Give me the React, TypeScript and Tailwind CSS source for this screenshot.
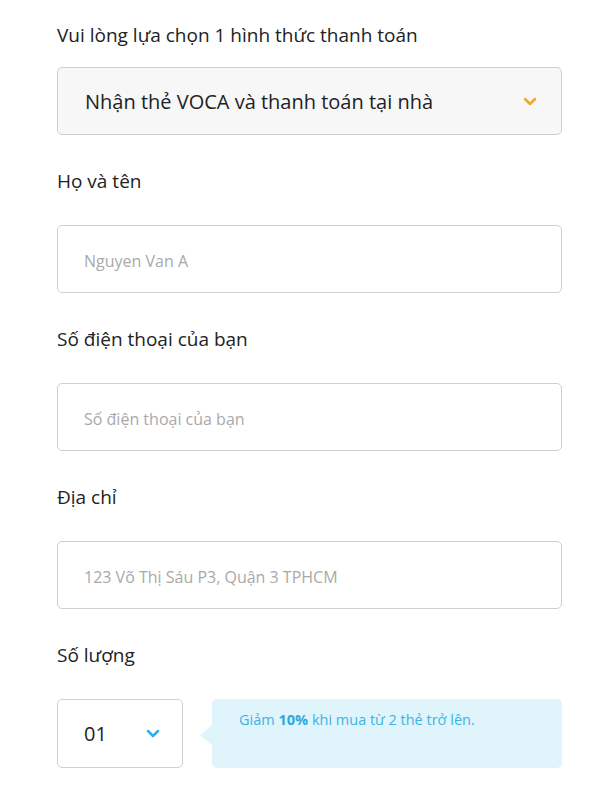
import React from 'react';

const ChevronDown = ({ className }: { className?: string }) => (
  <svg width="14" height="9" viewBox="0 0 14 9" fill="none" stroke="currentColor" strokeWidth="2.5" strokeLinecap="round" strokeLinejoin="round" className={className}>
    <polyline points="2 2 7 7 12 2" />
  </svg>
);

const fields = [
  { id: 'name', label: 'Họ và tên', placeholder: 'Nguyen Van A' },
  { id: 'phone', label: 'Số điện thoại của bạn', placeholder: 'Số điện thoại của bạn' },
  { id: 'address', label: 'Địa chỉ', placeholder: '123 Võ Thị Sáu P3, Quận 3 TPHCM' },
];

const App = () => {
  return (
    <div className="w-[600px] h-[798px] bg-white pl-[57px] pt-[23px] text-[#222] font-['Open_Sans',sans-serif]">
      <div className="w-[505px]">
        <p className="text-[19px] leading-6">Vui lòng lựa chọn 1 hình thức thanh toán</p>
        <div className="mt-5 h-[68px] flex items-center justify-between pl-[27px] pr-[24px] bg-[#f7f7f7] border border-[#cfcfcf] rounded-[5px]">
          <span className="text-[20px] pt-px">Nhận thẻ VOCA và thanh toán tại nhà</span>
          <ChevronDown className="text-[#f5a623]" />
        </div>

        {fields.map((f) => (
          <div key={f.id} className="mt-[34px]">
            <p className="text-[19px] leading-6">{f.label}</p>
            <div className="mt-8 h-[68px] flex items-center pl-[26px] pr-[27px] pt-1 border border-[#cfcfcf] rounded-[5px]">
              <span className="text-[16px] text-[#a9a9a9]">{f.placeholder}</span>
            </div>
          </div>
        ))}

        <div className="mt-[34px]">
          <p className="text-[19px] leading-6">Số lượng</p>
          <div className="mt-8 flex items-stretch">
            <div className="w-[126px] h-[69px] flex items-center justify-between pl-[26px] pr-[22px] border border-[#cfcfcf] rounded-[5px]">
              <span className="text-[20px]">01</span>
              <ChevronDown className="text-[#2ab0ea]" />
            </div>
            <div className="relative ml-[29px] flex-1 bg-[#dff4fb] rounded-[5px] pl-[27px] pt-[10px]">
              <span className="absolute left-[-12px] top-[26px] w-0 h-0 border-y-[10px] border-y-transparent border-r-[12px] border-r-[#dff4fb]" />
              <p className="text-[14.5px] text-[#40b3e6]">
                Giảm <span className="font-bold text-[#2aa8e0]">10%</span> khi mua từ 2 thẻ trở lên.
              </p>
            </div>
          </div>
        </div>
      </div>
    </div>
  );
};

export default App;
